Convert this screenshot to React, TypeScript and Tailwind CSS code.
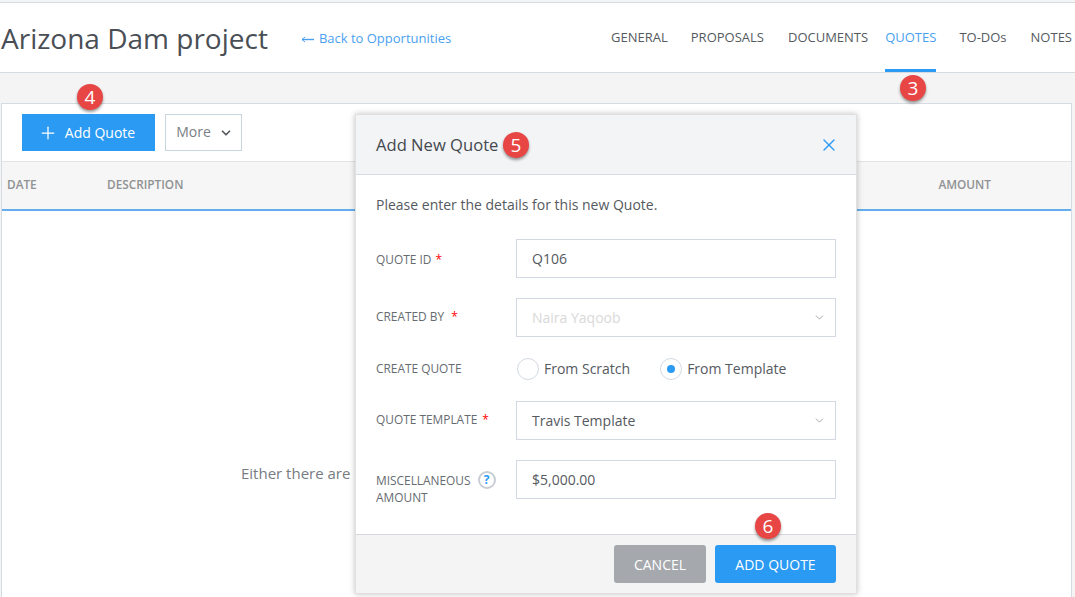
import { ChevronDown, Plus, X } from "lucide-react";

function Badge({ n, className }: { n: number; className: string }) {
  return (
    <span
      className={`absolute flex h-[26px] w-[26px] items-center justify-center rounded-full bg-[#e84545] text-[19px] leading-none text-white shadow-[0_2px_3px_rgba(0,0,0,0.4)] ${className}`}
    >
      {n}
    </span>
  );
}

function Label({
  text,
  star,
  gap = "ml-[4px]",
  className = "",
}: {
  text: string;
  star?: boolean;
  gap?: string;
  className?: string;
}) {
  return (
    <span className={`w-[140px] shrink-0 text-[11.9px] text-[#666b70] ${className}`}>
      {text}
      {star && <span className={`${gap} text-[#f00]`}>*</span>}
    </span>
  );
}

function Field({ value, muted, select }: { value: string; muted?: boolean; select?: boolean }) {
  return (
    <div
      className={`flex h-[39px] w-[320px] items-center justify-between border border-[#d3d9e2] pl-[15px] pr-[9px] text-[14px] ${
        muted ? "text-[#d9d9d9]" : "text-[#555a60]"
      }`}
    >
      <span>{value}</span>
      {select && <ChevronDown size={13} className="text-[#8f969d]" strokeWidth={1.5} />}
    </div>
  );
}

function Radio({ label, on }: { label: string; on?: boolean }) {
  return (
    <div className="flex items-center gap-[5px] text-[14px] text-[#555a60]">
      <span className="flex h-[22px] w-[22px] items-center justify-center rounded-full border border-[#d3d9e2] bg-white">
        {on && <span className="h-[8px] w-[8px] rounded-full bg-[#2b9af3]" />}
      </span>
      <span className="pb-[2px]">{label}</span>
    </div>
  );
}

const tabs = [
  { name: "GENERAL", cls: "ml-0" },
  { name: "PROPOSALS", cls: "ml-[23px]" },
  { name: "DOCUMENTS", cls: "ml-6" },
  { name: "QUOTES", cls: "ml-[17px]", active: true },
  { name: "TO-DOs", cls: "ml-[23px]" },
  { name: "NOTES", cls: "ml-6" },
];

export default function App() {
  return (
    <div className="relative flex h-[597px] w-[1075px] flex-col overflow-hidden bg-[#f4f4f4] font-['Open_Sans',sans-serif]">
      <header className="mt-[2px] flex h-[71px] shrink-0 items-center border-y border-[#d5dbe3] bg-white pl-[1px] pr-[3px]">
        <h1 className="text-[28px] leading-none text-[#4a4f55]">Arizona Dam project</h1>
        <a className="ml-[33px] flex items-center gap-[5px] pt-[3px] text-[13px] text-[#4a9fef]">
          <svg width="13" height="7" viewBox="0 0 13 7" fill="none" stroke="currentColor">
            <path d="M13 3.5H1" strokeWidth="1.4" />
            <path d="M4 1 1 3.5 4 6" strokeWidth="1" />
          </svg>
          Back to Opportunities
        </a>
        <nav className="ml-auto flex h-full items-stretch">
          {tabs.map((t) => (
            <span
              key={t.name}
              className={`flex items-center border-b-[3px] pt-[4px] text-[13px] ${t.cls} ${
                t.active ? "border-[#2b9af3] text-[#4a9fef]" : "border-transparent text-[#555a60]"
              }`}
            >
              {t.name}
            </span>
          ))}
        </nav>
      </header>

      <main className="ml-[1px] mr-[3px] mt-[30px] flex flex-1 flex-col border-x border-t border-[#d5dbe3] bg-white">
        <div className="flex h-[57px] shrink-0 items-start gap-[10px] pl-[20px] pt-[10px]">
          <button className="flex h-[37px] w-[133px] items-center justify-center gap-[7px] bg-[#2b9af3] pr-[4px] text-[14px] text-white">
            <Plus size={20} strokeWidth={1.5} />
            Add Quote
          </button>
          <button className="flex h-[37px] w-[77px] items-center justify-center gap-[8px] border border-[#c8d6df] pb-[2px] pl-[2px] text-[14px] text-[#7a7f85]">
            More
            <ChevronDown size={14} strokeWidth={3} className="mt-[2px] text-[#555a60]" />
          </button>
        </div>
        <div className="flex h-[50px] shrink-0 items-center border-y border-b-2 border-[#e2e4e6] border-b-[#64aeee] bg-[#f6f6f6] pb-[2px] text-[11.8px] font-semibold text-[#8f9193]">
          <span className="ml-[5px] w-[100px]">DATE</span>
          <span>DESCRIPTION</span>
          <span className="ml-auto mr-[80px]">AMOUNT</span>
        </div>
        <div className="flex flex-1 items-start pl-[239px] pt-[251px] text-[15px] text-[#777c82]">
          Either there are
        </div>
      </main>

      <Badge n={4} className="left-[77px] top-[84px]" />
      <Badge n={3} className="left-[900px] top-[75px]" />

      <section className="absolute left-[355px] top-[114px] flex h-[480px] w-[502px] flex-col border border-[#e0e0e0] bg-white shadow-[0_0_6px_rgba(0,0,0,0.25)]">
        <div className="flex h-[60px] shrink-0 items-center justify-between border-b border-[#d5dbe3] bg-[#f3f4f6] pl-[20px] pr-[17px] pt-[1px]">
          <h2 className="text-[16.6px] text-[#43484e]">Add New Quote</h2>
          <X size={20} strokeWidth={1.6} className="text-[#2b9af3]" />
        </div>
        <div className="flex-1 px-[20px] pt-[19px] text-[#555a60]">
          <p className="h-[45px] text-[14px]">Please enter the details for this new Quote.</p>
          <div className="flex items-center">
            <Label text="QUOTE ID" star className="pt-[2px]" />
            <Field value="Q106" />
          </div>
          <div className="mt-[20px] flex items-center">
            <Label text="CREATED BY" star gap="ml-[7px]" className="pb-[2px]" />
            <Field value="Naira Yaqoob" muted select />
          </div>
          <div className="mt-[20px] flex h-[24px] items-center">
            <Label text="CREATE QUOTE" />
            <div className="flex gap-[30px] pl-[1px]">
              <Radio label="From Scratch" />
              <Radio label="From Template" on />
            </div>
          </div>
          <div className="mt-[20px] flex items-center">
            <Label text="QUOTE TEMPLATE" star gap="ml-[5px]" className="pb-[2px]" />
            <Field value="Travis Template" select />
          </div>
          <div className="mt-[20px] flex items-start">
            <div className="w-[140px] shrink-0 pt-[11px] text-[11.9px] leading-[16px] text-[#666b70]">
              <div className="flex items-center gap-[7px]">
                MISCELLANEOUS
                <span className="flex h-[18px] w-[18px] items-center justify-center rounded-full border-2 border-[#c9ced4] text-[12px] font-bold leading-none text-[#2b9af3]">
                  ?
                </span>
              </div>
              AMOUNT
            </div>
            <Field value="$5,000.00" />
          </div>
        </div>
        <div className="flex h-[59px] shrink-0 items-start justify-end gap-[9px] border-t border-[#d5d8dc] bg-[#f4f4f4] pr-[20px] pt-[10px]">
          <button className="h-[38px] w-[92px] rounded-[3px] bg-[#a5a8ac] text-[14px] text-white">CANCEL</button>
          <button className="h-[38px] w-[121px] rounded-[3px] bg-[#2b9af3] text-[14px] text-white">ADD QUOTE</button>
        </div>
      </section>

      <Badge n={5} className="left-[503px] top-[132px]" />
      <Badge n={6} className="left-[755px] top-[513px]" />
    </div>
  );
}
